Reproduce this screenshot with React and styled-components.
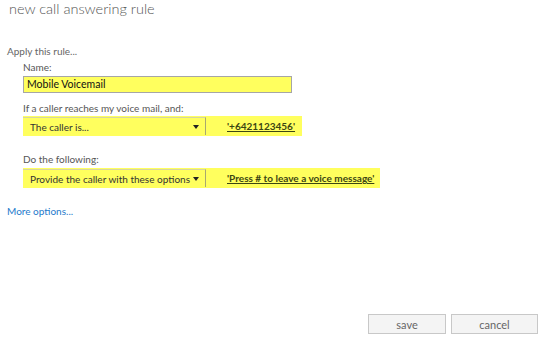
import React from 'react';
import styled, { createGlobalStyle } from 'styled-components';

const GlobalStyle = createGlobalStyle`
  html, body {
    margin: 0;
    padding: 0;
    background: #ffffff;
  }
  body {
    font-family: 'Lato', 'Open Sans', sans-serif;
    color: #444;
  }
`;

const Page = styled.div`
  width: 548px;
  height: 340px;
  display: flex;
  flex-direction: column;
  overflow: hidden;
`;

const Title = styled.h1`
  margin: 0 0 0 9px;
  font-size: 14.5px;
  line-height: 17px;
  font-weight: 300;
  color: #555;
  white-space: nowrap;
`;

const Section = styled.div`
  margin: 27px 0 0 7px;
  display: flex;
  flex-direction: column;
`;

const Lead = styled.div`
  font-size: 10px;
  line-height: 15px;
  color: #666;
`;

const Group = styled.div`
  margin-left: 16px;
  display: flex;
  flex-direction: column;
  margin-top: ${(p) => p.$top || 0}px;
`;

const Label = styled.div`
  font-size: 10px;
  line-height: 15px;
  color: #555;
  margin-bottom: ${(p) => p.$gap || 0}px;
  white-space: nowrap;
`;

const TextInput = styled.div`
  width: 264px;
  height: 15px;
  border: 1px solid #a6a6a6;
  background: #ffff5e;
  font-size: 10.5px;
  line-height: 15px;
  padding: 0 0 0 3px;
  color: #111;
`;

const Highlight = styled.div`
  display: flex;
  align-items: center;
  width: ${(p) => p.$width}px;
  height: 20px;
  background: #ffff5e;
`;

const Select = styled.div`
  flex: none;
  width: 183px;
  height: 18px;
  border-top: 1px solid #d6d6a0;
  border-right: 1px solid #a8a870;
  display: flex;
  align-items: center;
  justify-content: space-between;
  padding: 0 6px 0 7px;
  box-sizing: border-box;
  font-size: 10px;
  color: #333;
  white-space: nowrap;
`;

const Arrow = styled.span`
  width: 0;
  height: 0;
  border-left: 3px solid transparent;
  border-right: 3px solid transparent;
  border-top: 4px solid #222;
  margin-top: 1px;
`;

const Value = styled.a`
  margin-left: 21px;
  font-size: 10px;
  font-weight: 700;
  color: #3c4612;
  text-decoration: underline;
  white-space: nowrap;
  cursor: pointer;
`;

const MoreLink = styled.a`
  margin: 16px 0 0 7px;
  font-size: 10px;
  line-height: 15px;
  color: #1e7acb;
  cursor: pointer;
`;

const Footer = styled.div`
  margin-top: auto;
  margin-bottom: 6px;
  padding-right: 10px;
  display: flex;
  justify-content: flex-end;
  gap: 5px;
`;

const Button = styled.button`
  width: ${(p) => p.$width}px;
  height: 20px;
  background: #f4f4f4;
  border: 1px solid #c8c8c8;
  font-family: inherit;
  font-size: 11px;
  color: #666;
  padding: 0;
`;

export default function App() {
  return (
    <Page>
      <GlobalStyle />
      <Title>new call answering rule</Title>
      <Section>
        <Lead>Apply this rule...</Lead>
        <Group $top={1}>
          <Label $gap={1}>Name:</Label>
          <TextInput>Mobile Voicemail</TextInput>
        </Group>
        <Group $top={8}>
          <Label>If a caller reaches my voice mail, and:</Label>
          <Highlight $width={279}>
            <Select>
              The caller is...
              <Arrow />
            </Select>
            <Value>'+6421123456'</Value>
          </Highlight>
        </Group>
        <Group $top={16}>
          <Label $gap={1}>Do the following:</Label>
          <Highlight $width={357}>
            <Select>
              Provide the caller with these options
              <Arrow />
            </Select>
            <Value>'Press # to leave a voice message'</Value>
          </Highlight>
        </Group>
      </Section>
      <MoreLink>More options...</MoreLink>
      <Footer>
        <Button $width={78}>save</Button>
        <Button $width={87}>cancel</Button>
      </Footer>
    </Page>
  );
}
